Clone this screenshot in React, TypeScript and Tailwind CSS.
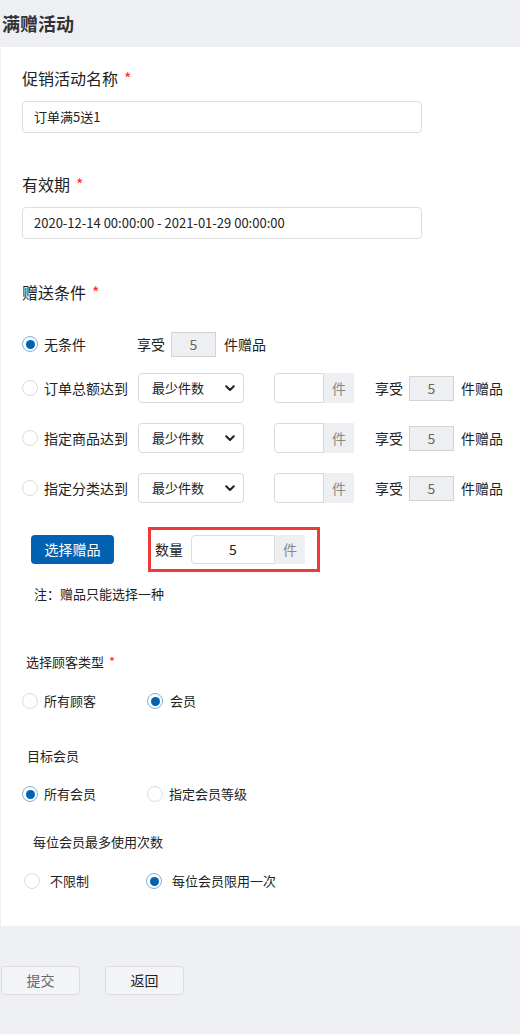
import React from "react";

const font = { fontFamily: '"Noto Sans CJK SC", "Noto Sans", sans-serif' };

function Radio({ checked }: { checked?: boolean }) {
  return checked ? (
    <span className="flex h-[16px] w-[16px] shrink-0 items-center justify-center rounded-full border border-[#7fb0dd] bg-white">
      <span className="h-[9px] w-[9px] rounded-full bg-[#0062b1]" />
    </span>
  ) : (
    <span className="block h-[16px] w-[16px] shrink-0 rounded-full border border-[#dcdcdc] bg-white" />
  );
}

function Star() {
  return <span className="ml-[6px] text-[#ff2a2a]">*</span>;
}

function Chevron() {
  return (
    <svg width="10" height="7" viewBox="0 0 10 7" className="absolute right-[8px] top-[11px]">
      <path d="M1.2 1.2 L5 5 L8.8 1.2" fill="none" stroke="#222" strokeWidth="2" strokeLinecap="round" strokeLinejoin="round" />
    </svg>
  );
}

function CondRow({ label }: { label: string }) {
  return (
    <div className="flex h-[30px] items-center">
      <Radio />
      <span className="ml-[6px] w-[94px] text-[14px] text-[#222]">{label}</span>
      <div className="relative flex h-[30px] w-[106px] items-center rounded-[4px] border border-[#d9d9d9] bg-white pl-[13px] text-[13px] text-[#222]">
        最少件数
        <Chevron />
      </div>
      <div className="ml-[30px] flex h-[30px] items-center">
        <div className="h-[30px] w-[50px] rounded-l-[4px] border border-[#d9d9d9] bg-white" />
        <div className="flex h-[30px] w-[30px] items-center justify-center bg-[#eeeff3] text-[14px] text-[#888]">件</div>
      </div>
      <span className="ml-[21px] text-[14px] text-[#222]">享受</span>
      <div className="ml-[6px] flex h-[25px] w-[45px] items-center justify-center border border-[#d3d3d3] bg-[#eeeff3] text-[14px] text-[#666]">5</div>
      <span className="ml-[7px] text-[14px] text-[#222]">件赠品</span>
    </div>
  );
}

export default function App() {
  return (
    <div className="min-h-[1034px] bg-[#eeeff3]" style={font}>
      <div className="flex h-[47px] items-center pl-[2px]">
        <h1 className="text-[18px] font-bold text-[#333]">满赠活动</h1>
      </div>
      <div className="ml-px bg-white pl-[21px] pt-[19px] pb-[36px]">
        <div className="h-[24px] text-[16px] leading-[24px] text-[#222]">
          促销活动名称<Star />
        </div>
        <div className="mt-[11px] flex h-[32px] w-[400px] items-center rounded-[4px] border border-[#dedede] pl-[11px] text-[13px] text-[#222]">
          订单满5送1
        </div>

        <div className="mt-[39px] h-[24px] text-[16px] leading-[24px] text-[#222]">
          有效期<Star />
        </div>
        <div className="mt-[11px] flex h-[32px] w-[400px] items-center rounded-[4px] border border-[#dedede] pl-[11px] text-[13px] text-[#222]">
          2020-12-14 00:00:00 - 2021-01-29 00:00:00
        </div>

        <div className="mt-[41px] h-[24px] text-[16px] leading-[24px] text-[#222]">
          赠送条件<Star />
        </div>

        <div className="mt-[28px] flex h-[24px] items-center">
          <Radio checked />
          <span className="ml-[6px] w-[93px] text-[14px] text-[#222]">无条件</span>
          <span className="text-[14px] text-[#222]">享受</span>
          <div className="ml-[6px] flex h-[25px] w-[45px] items-center justify-center border border-[#d3d3d3] bg-[#eeeff3] text-[14px] text-[#666]">5</div>
          <span className="ml-[8px] text-[14px] text-[#222]">件赠品</span>
        </div>

        <div className="mt-[17px] flex flex-col gap-[20px]">
          <CondRow label="订单总额达到" />
          <CondRow label="指定商品达到" />
          <CondRow label="指定分类达到" />
        </div>

        <div className="mt-[24px] flex items-center">
          <button className="ml-[9px] h-[29px] w-[83px] rounded-[4px] bg-[#0062b1] text-[14px] text-white">选择赠品</button>
          <div className="ml-[34px] flex h-[45px] w-[172px] items-center border-[3px] border-[#f03a3a] pl-[4px]">
            <span className="text-[14px] text-[#222]">数量</span>
            <div className="ml-[8px] flex h-[29px] w-[84px] items-center justify-center rounded-l-[4px] border border-[#dcdcdc] text-[14px] text-[#222]">5</div>
            <div className="flex h-[29px] w-[30px] items-center justify-center bg-[#eeeff3] text-[14px] text-[#888]">件</div>
          </div>
        </div>

        <div className="ml-[12px] mt-[13px] h-[18px] text-[13px] leading-[18px] text-[#222]">注：赠品只能选择一种</div>

        <div className="ml-[4px] mt-[50px] h-[18px] text-[13px] leading-[18px] text-[#222]">
          选择顾客类型<span className="ml-[5px] text-[#ff2a2a]">*</span>
        </div>
        <div className="mt-[21px] flex h-[18px] items-center">
          <Radio />
          <span className="ml-[6px] w-[103px] text-[13px] text-[#222]">所有顾客</span>
          <Radio checked />
          <span className="ml-[7px] text-[13px] text-[#222]">会员</span>
        </div>

        <div className="ml-[5px] mt-[37px] h-[18px] text-[13px] leading-[18px] text-[#222]">目标会员</div>
        <div className="mt-[20px] flex h-[18px] items-center">
          <Radio checked />
          <span className="ml-[6px] w-[103px] text-[13px] text-[#222]">所有会员</span>
          <Radio />
          <span className="ml-[6px] text-[13px] text-[#222]">指定会员等级</span>
        </div>

        <div className="ml-[11px] mt-[30px] h-[18px] text-[13px] leading-[18px] text-[#222]">每位会员最多使用次数</div>
        <div className="mt-[21px] flex h-[18px] items-center">
          <div className="ml-[2px] flex"><Radio /></div>
          <span className="ml-[10px] w-[96px] text-[13px] text-[#222]">不限制</span>
          <Radio checked />
          <span className="ml-[10px] text-[13px] text-[#222]">每位会员限用一次</span>
        </div>
      </div>

      <div className="mt-[40px] flex items-center gap-[25px] pl-[1px]">
        <button className="h-[29px] w-[79px] rounded-[4px] border border-[#dcdcdc] bg-[#f3f4f8] text-[14px] text-[#666]">提交</button>
        <button className="h-[29px] w-[79px] rounded-[4px] border border-[#dcdcdc] bg-[#f3f4f8] text-[14px] text-[#222]">返回</button>
      </div>
    </div>
  );
}
